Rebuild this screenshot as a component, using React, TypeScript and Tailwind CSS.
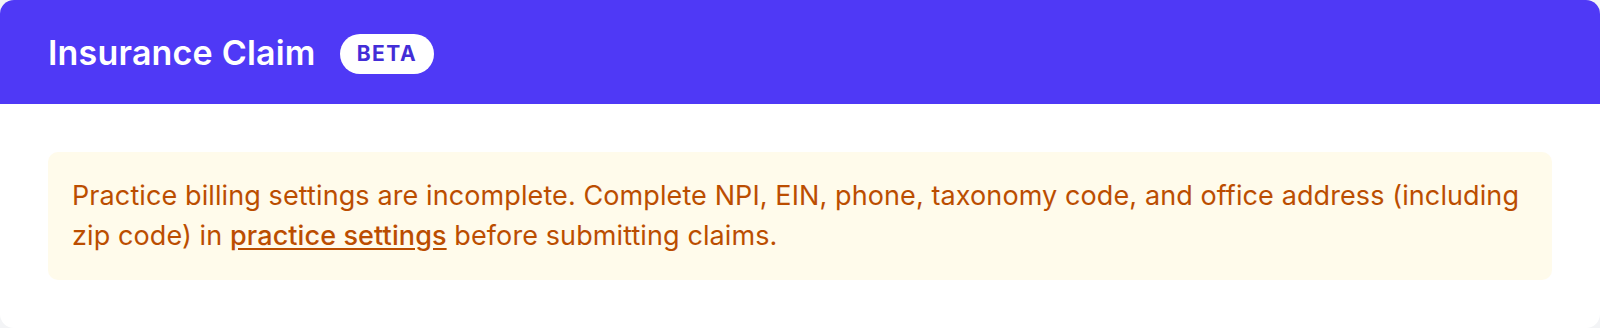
export default function App() {
  return (
    <div className="min-h-[328px] bg-gray-100 font-['Inter',sans-serif]">
      <div className="overflow-hidden rounded-[14px] bg-white">
        {/* Header */}
        <div className="flex h-[104px] items-center gap-6 bg-indigo-600 px-12">
          <h1 className="text-[34px] font-semibold tracking-[0.2px] text-white">Insurance Claim</h1>
          <span className="mt-1 flex h-10 items-center rounded-full bg-white px-[17px] text-[21px] font-bold tracking-[1.5px] text-indigo-700">
            BETA
          </span>
        </div>

        {/* Body */}
        <div className="p-12">
          <div className="rounded-[10px] bg-amber-50 p-6 text-[27px] leading-[40px] tracking-[0.1px] text-amber-700">
            Practice billing settings are incomplete. Complete NPI, EIN, phone, taxonomy code, and office address (including zip code) in{" "}
            <a href="#" className="font-medium underline underline-offset-[3px]">
              practice settings
            </a>{" "}
            before submitting claims.
          </div>
        </div>
      </div>
    </div>
  );
}
